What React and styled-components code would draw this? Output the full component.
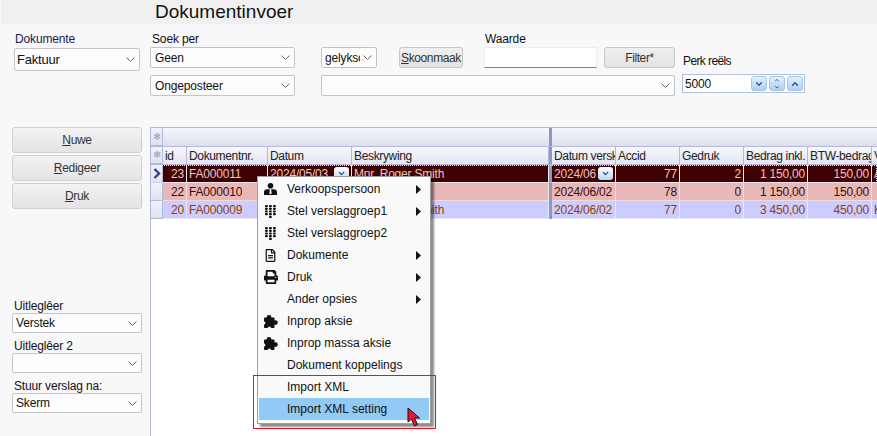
import styled, { createGlobalStyle } from "styled-components";
import { ChevronDown, ChevronUp } from "lucide-react";
import { FaRegFileAlt, FaPrint } from "react-icons/fa";

const GlobalStyle = createGlobalStyle`
  html, body {
    margin: 0;
    padding: 0;
    background: #f8f8fb;
    font-family: "Liberation Sans", Arial, sans-serif;
    font-size: 12px;
    letter-spacing: -0.15px;
    color: #111;
  }
  * { box-sizing: border-box; }
`;

const COLS = "12px 24px 81px 84px 197px 3px 64px 64px 64px 64px 64px 60px";

const Chevron = () => (
  <svg width="9" height="5" viewBox="0 0 9 5" fill="none" stroke="#666" strokeWidth="1" style={{ flex: "none" }}>
    <path d="M0.5 0.5 L4.5 4.5 L8.5 0.5" />
  </svg>
);

const PersonIcon = () => (
  <svg width="13" height="12" viewBox="0 0 13 12" fill="#111">
    <circle cx="6.5" cy="2.8" r="2.8" />
    <path d="M0 12 V9 Q0 6.4 3.4 6.2 L5.8 6.2 L5.4 11 H7.6 L7.2 6.2 L9.6 6.2 Q13 6.4 13 9 V12 Z" />
  </svg>
);

const DialIcon = () => (
  <svg width="11" height="13" viewBox="0 0 11 13" fill="#111">
    {[0, 1, 2, 3].map((r) =>
      [0, 1, 2].map((c) => <rect key={r + "-" + c} x={c * 4} y={r * 2.7} width="2.8" height="2.2" rx="0.8" />)
    )}
    <rect x="4" y="10.8" width="2.8" height="2.2" rx="0.8" />
  </svg>
);

const PuzzleIcon = () => (
  <svg width="15" height="13" viewBox="0 0 15 13" fill="#111">
    <rect x="1" y="2.5" width="10.5" height="10.5" rx="0.8" />
    <circle cx="6" cy="2.4" r="2.4" />
    <circle cx="12.4" cy="7.6" r="2.4" />
    <circle cx="0.6" cy="8" r="1.8" fill="#f9f9f9" />
    <circle cx="6.4" cy="13.2" r="1.8" fill="#f9f9f9" />
  </svg>
);

const Caret = () => (
  <svg width="5" height="9" viewBox="0 0 5 9" fill="#111" style={{ flex: "none" }}>
    <path d="M0 0 L5 4.5 L0 9 Z" />
  </svg>
);

const menuItems = [
  { label: "Verkoopspersoon", icon: <PersonIcon />, sub: true },
  { label: "Stel verslaggroep1", icon: <DialIcon />, sub: true },
  { label: "Stel verslaggroep2", icon: <DialIcon /> },
  { label: "Dokumente", icon: <FaRegFileAlt size={13} />, sub: true },
  { label: "Druk", icon: <FaPrint size={14} />, sub: true },
  { label: "Ander opsies", sub: true },
  { label: "Inprop aksie", icon: <PuzzleIcon /> },
  { label: "Inprop massa aksie", icon: <PuzzleIcon /> },
  { label: "Dokument koppelings" },
  { label: "Import XML" },
  { label: "Import XML setting", active: true },
];

const headers = ["id", "Dokumentnr.", "Datum", "Beskrywing", null, "Datum versk", "Accid", "Gedruk", "Bedrag inkl.", "BTW-bedrag", "V"];

const rows = [
  { kind: "selected", cells: ["23", "FA000011", "2024/05/03", "Mnr. Roger Smith", null, "2024/06", "77", "2", "1 150,00", "150,00", "A"], combo: true },
  { kind: "pink", cells: ["22", "FA000010", "2024/06/02", "", null, "2024/06/02", "78", "0", "1 150,00", "150,00", ""] },
  { kind: "blue", cells: ["20", "FA000009", "2024/06/02", "Mnr. Roger Smith", null, "2024/06/02", "77", "0", "3 450,00", "450,00", "K"] },
];

const rightAligned = [0, 6, 7, 8, 9];

const rowColors = {
  selected: { bg: "#400000", fg: "#ecc6c6", line: "#e8e8f0" },
  pink: { bg: "#e8b8b8", fg: "#400808", line: "#f3dada" },
  blue: { bg: "#ccccff", fg: "#8f4000", line: "#e6e6ff" },
};

const App = () => {
  return (
    <Page>
      <GlobalStyle />
      <TitleBar>Dokumentinvoer</TitleBar>

      <FilterBar>
        <FieldLabel $col={1} $row={1} $color="#1a1a50">Dokumente</FieldLabel>
        <BigSelect $col={1} $row={2}>
          <span>Faktuur</span>
          <Chevron />
        </BigSelect>

        <FieldLabel $col={3} $row={1}>Soek per</FieldLabel>
        <Select $col={3} $row={2}>
          <span>Geen</span>
          <Chevron />
        </Select>
        <Select $col={3} $row={4}>
          <span>Ongeposteer</span>
          <Chevron />
        </Select>

        <Select $col={5} $row={2} $pad={3}>
          <ClipText>gelyksoortig</ClipText>
          <Chevron />
        </Select>
        <Select $col="5 / 12" $row={4}>
          <span />
          <Chevron />
        </Select>

        <FlatButton $col={7} $row={2}>
          <span><u>S</u>koonmaak</span>
        </FlatButton>

        <FieldLabel $col={9} $row={1}>Waarde</FieldLabel>
        <ValueInput $col={9} $row={2} />

        <FlatButton $col={11} $row={2}>Filter*</FlatButton>

        <PerkLabel>Perk reëls</PerkLabel>
        <Spinner>
          <SpinnerValue>5000</SpinnerValue>
          <SpinButton><ChevronDown size={10} strokeWidth={3} color="#1c4f9c" /></SpinButton>
          <SpinButton $stacked>
            <ChevronUp size={8} strokeWidth={3} color="#1c4f9c" />
            <ChevronDown size={8} strokeWidth={3} color="#1c4f9c" />
          </SpinButton>
          <SpinButton><ChevronUp size={10} strokeWidth={3} color="#1c4f9c" /></SpinButton>
        </Spinner>
      </FilterBar>

      <Main>
        <Sidebar>
          <ActionButton><span><u>N</u>uwe</span></ActionButton>
          <ActionButton><span><u>R</u>edigeer</span></ActionButton>
          <ActionButton><span><u>D</u>ruk</span></ActionButton>

          <SideFields>
            <SideLabel>Uitleglêer</SideLabel>
            <SideSelect>
              <span>Verstek</span>
              <Chevron />
            </SideSelect>
            <SideLabel $gap={20}>Uitleglêer 2</SideLabel>
            <SideSelect>
              <span />
              <Chevron />
            </SideSelect>
            <SideLabel $gap={20}>Stuur verslag na:</SideLabel>
            <SideSelect>
              <span>Skerm</span>
              <Chevron />
            </SideSelect>
          </SideFields>
        </Sidebar>

        <DataGrid>
          <GroupRow>
            <Indicator><Snow>❄</Snow></Indicator>
            <GroupBand $span="2 / 6" />
            <Splitter />
            <GroupBand $span="7 / 13" />
          </GroupRow>

          <HeaderRow>
            <Indicator><Snow>❄</Snow></Indicator>
            {headers.map((h, i) =>
              h === null ? <Splitter key={i} /> : <HeaderCell key={i}>{h}</HeaderCell>
            )}
          </HeaderRow>

          {rows.map((row) => (
            <Row key={row.cells[0]} $kind={row.kind}>
              <Indicator>
                {row.kind === "selected" && (
                  <svg width="8" height="11" viewBox="0 0 8 11" fill="none" stroke="#33437e" strokeWidth="2.4">
                    <path d="M1.5 1 L6 5.5 L1.5 10" />
                  </svg>
                )}
              </Indicator>
              {row.cells.map((c, i) =>
                c === null ? (
                  <Splitter key={i} />
                ) : (
                  <Cell key={i} $kind={row.kind} $right={rightAligned.includes(i)}>
                    <ClipText>{c}</ClipText>
                    {row.combo && (i === 2 || i === 5) && (
                      <ComboButton><ChevronDown size={9} strokeWidth={3.5} color="#1c4f9c" /></ComboButton>
                    )}
                  </Cell>
                )
              )}
            </Row>
          ))}
        </DataGrid>
      </Main>

      <Menu>
        {menuItems.map((item) => (
          <MenuItem key={item.label} $active={item.active}>
            <MenuIcon>{item.icon}</MenuIcon>
            <MenuText>{item.label}</MenuText>
            {item.sub && <Caret />}
          </MenuItem>
        ))}
        <RedOutline />
        <Pointer viewBox="0 0 14 20" width="14" height="20">
          <path d="M1 1 L1 15 L4.5 12 L7.5 19 L10.5 17.5 L7.5 11 L12.5 11 Z" fill="#f0143c" stroke="#111" strokeWidth="1" />
        </Pointer>
      </Menu>
    </Page>
  );
};

export default App;

const Page = styled.div`
  position: relative;
  width: 877px;
  height: 436px;
  overflow: hidden;
  background: #f8f8fb;
`;

const TitleBar = styled.div`
  height: 24px;
  margin-left: 1px;
  padding-left: 154px;
  background: #f0f0f0;
  font-size: 19px;
  line-height: 24px;
  letter-spacing: 0;
  color: #111;
`;

const FilterBar = styled.div`
  height: 103px;
  padding: 8px 0 0 14px;
  display: grid;
  grid-template-columns: 126px 10px 145px 26px 56px 22px 64px 21px 113px 7px 71px 7px 124px;
  grid-template-rows: 15px 21px 7px 21px;
  align-content: start;
`;

const FieldLabel = styled.div`
  grid-column: ${(p) => p.$col};
  grid-row: ${(p) => p.$row};
  color: ${(p) => p.$color || "#111"};
  line-height: 14px;
  padding-left: ${(p) => (p.$col === 3 ? 2 : 1)}px;
`;

const Select = styled.div`
  grid-column: ${(p) => p.$col};
  grid-row: ${(p) => p.$row};
  display: flex;
  align-items: center;
  justify-content: space-between;
  gap: 3px;
  padding: 0 4px 0 ${(p) => p.$pad || 4}px;
  background: #fdfdfd;
  border: 1px solid #c4c4c4;
  border-radius: 2px;
  min-width: 0;
  overflow: hidden;
  white-space: nowrap;
`;

const BigSelect = styled(Select)`
  grid-row: 2 / 4;
  height: 23px;
  margin-top: 1px;
  font-size: 13px;
  letter-spacing: -0.2px;
  padding-left: 2px;
`;

const ClipText = styled.span`
  overflow: hidden;
  white-space: nowrap;
  min-width: 0;
`;

const FlatButton = styled.div`
  grid-column: ${(p) => p.$col};
  grid-row: ${(p) => p.$row};
  display: flex;
  align-items: center;
  justify-content: center;
  background: linear-gradient(#f0f0f0, #e2e2e2);
  border: 1px solid #c6c6c6;
  border-radius: 3px;
  white-space: nowrap;
  letter-spacing: -0.4px;
  color: #333;
`;

const ValueInput = styled.input`
  grid-column: ${(p) => p.$col};
  grid-row: ${(p) => p.$row};
  min-width: 0;
  background: #fff;
  border: 1px solid #ececec;
  border-bottom: 1px solid #808080;
  outline: none;
`;

const PerkLabel = styled.div`
  grid-column: 13;
  grid-row: 2;
  align-self: end;
  margin-left: 1px;
  line-height: 14px;
  letter-spacing: -0.6px;
`;

const Spinner = styled.div`
  grid-column: 13;
  grid-row: 4;
  height: 19px;
  width: 123px;
  margin-top: -1px;
  display: flex;
  align-items: center;
  gap: 2px;
  background: #fff;
  border: 1px solid #b4c0e0;
  padding: 1px;
`;

const SpinnerValue = styled.span`
  width: 65px;
  padding-left: 1px;
`;

const SpinButton = styled.div`
  width: 16px;
  height: 15px;
  display: flex;
  flex-direction: ${(p) => (p.$stacked ? "column" : "row")};
  align-items: center;
  justify-content: center;
  background: linear-gradient(#e4effb, #add0f3);
  border: 1px solid #a8c4e4;
  border-radius: 3px;
  overflow: hidden;
`;

const Main = styled.div`
  display: flex;
  height: 309px;
`;

const Sidebar = styled.div`
  width: 150px;
  flex: none;
  padding: 0 8px 0 12px;
  display: flex;
  flex-direction: column;
  gap: 2px;
`;

const ActionButton = styled.div`
  height: 26px;
  display: flex;
  align-items: center;
  justify-content: center;
  background: linear-gradient(#f2f2f2, #e4e4e4);
  border: 1px solid #cfcfcf;
  border-radius: 3px;
  letter-spacing: -0.3px;
  color: #333;
`;

const SideFields = styled.div`
  margin-top: 88px;
  display: flex;
  flex-direction: column;
`;

const SideLabel = styled.div`
  height: 14px;
  line-height: 14px;
  padding-left: 2px;
  margin-top: ${(p) => (p.$gap ? p.$gap - 14 : 0)}px;
`;

const SideSelect = styled.div`
  height: 20px;
  display: flex;
  align-items: center;
  justify-content: space-between;
  padding: 0 4px 0 3px;
  background: #fdfdfd;
  border: 1px solid #c4c4c4;
  border-radius: 2px;
`;

const DataGrid = styled.div`
  flex: 1;
  min-width: 0;
  overflow: hidden;
  background: #fff;
  border-left: 1px solid #b4b9d9;
  border-top: 1px solid #b4b9d9;
`;

const GridLine = styled.div`
  display: grid;
  grid-template-columns: ${COLS};
`;

const GroupRow = styled(GridLine)`
  height: 19px;
  border-bottom: 1px solid #b4b9d9;
`;

const GroupBand = styled.div`
  grid-column: ${(p) => p.$span};
  background: linear-gradient(#f6f6fb, #dcdfec);
`;

const HeaderRow = styled(GridLine)`
  height: 18px;
  border-bottom: 1px solid #b4b9d9;
`;

const Row = styled(GridLine)`
  height: 18px;
  background: ${(p) => rowColors[p.$kind].bg};
  ${(p) => p.$kind === "selected" && "outline: 1px dotted #e8e8f0; outline-offset: -1px;"}
`;

const Indicator = styled.div`
  display: flex;
  align-items: center;
  justify-content: center;
  background: linear-gradient(#f2f3f9, #dfe2ef);
  border-right: 1px solid #b4b9d9;
  border-bottom: 1px solid #b4b9d9;
`;

const Snow = styled.span`
  font-size: 10px;
  color: #8f9ac8;
  line-height: 1;
`;

const Splitter = styled.div`
  background: #8b97c6;
`;

const HeaderCell = styled.div`
  display: flex;
  align-items: center;
  padding-left: 2px;
  background: linear-gradient(#f7f7fb, #e2e4f0);
  border-right: 1px solid #b4b9d9;
  white-space: nowrap;
  overflow: hidden;
  letter-spacing: -0.35px;
  color: #222;
`;

const Cell = styled.div`
  display: flex;
  align-items: center;
  justify-content: ${(p) => (p.$right ? "flex-end" : "space-between")};
  padding: 0 2px;
  color: ${(p) => rowColors[p.$kind].fg};
  border-right: 1px solid ${(p) => rowColors[p.$kind].line};
  border-bottom: 1px solid ${(p) => rowColors[p.$kind].line};
  overflow: hidden;
  letter-spacing: -0.2px;
`;

const ComboButton = styled.div`
  width: 15px;
  height: 13px;
  flex: none;
  display: flex;
  align-items: center;
  justify-content: center;
  background: linear-gradient(#ffffff, #b8d6f4);
  border-radius: 3px;
`;

const Menu = styled.div`
  position: absolute;
  left: 257px;
  top: 176px;
  width: 174px;
  height: 248px;
  padding: 1px;
  background: #f9f9f9;
  border: 1px solid #a0a0a0;
  box-shadow: 3px 3px 2px rgba(0, 0, 0, 0.45);
`;

const MenuItem = styled.div`
  height: 22px;
  display: flex;
  align-items: center;
  padding-right: 8px;
  background: ${(p) => (p.$active ? "#91c9f7" : "transparent")};
`;

const MenuIcon = styled.span`
  width: 28px;
  padding-right: 5px;
  flex: none;
  display: flex;
  align-items: center;
  justify-content: center;
  color: #111;
`;

const MenuText = styled.span`
  flex: 1;
  color: #111;
  letter-spacing: 0;
`;

const RedOutline = styled.div`
  position: absolute;
  left: -5px;
  top: 198px;
  width: 183px;
  height: 54px;
  border: 1px solid #e8141c;
  pointer-events: none;
`;

const Pointer = styled.svg`
  position: absolute;
  left: 149px;
  top: 230px;
`;
